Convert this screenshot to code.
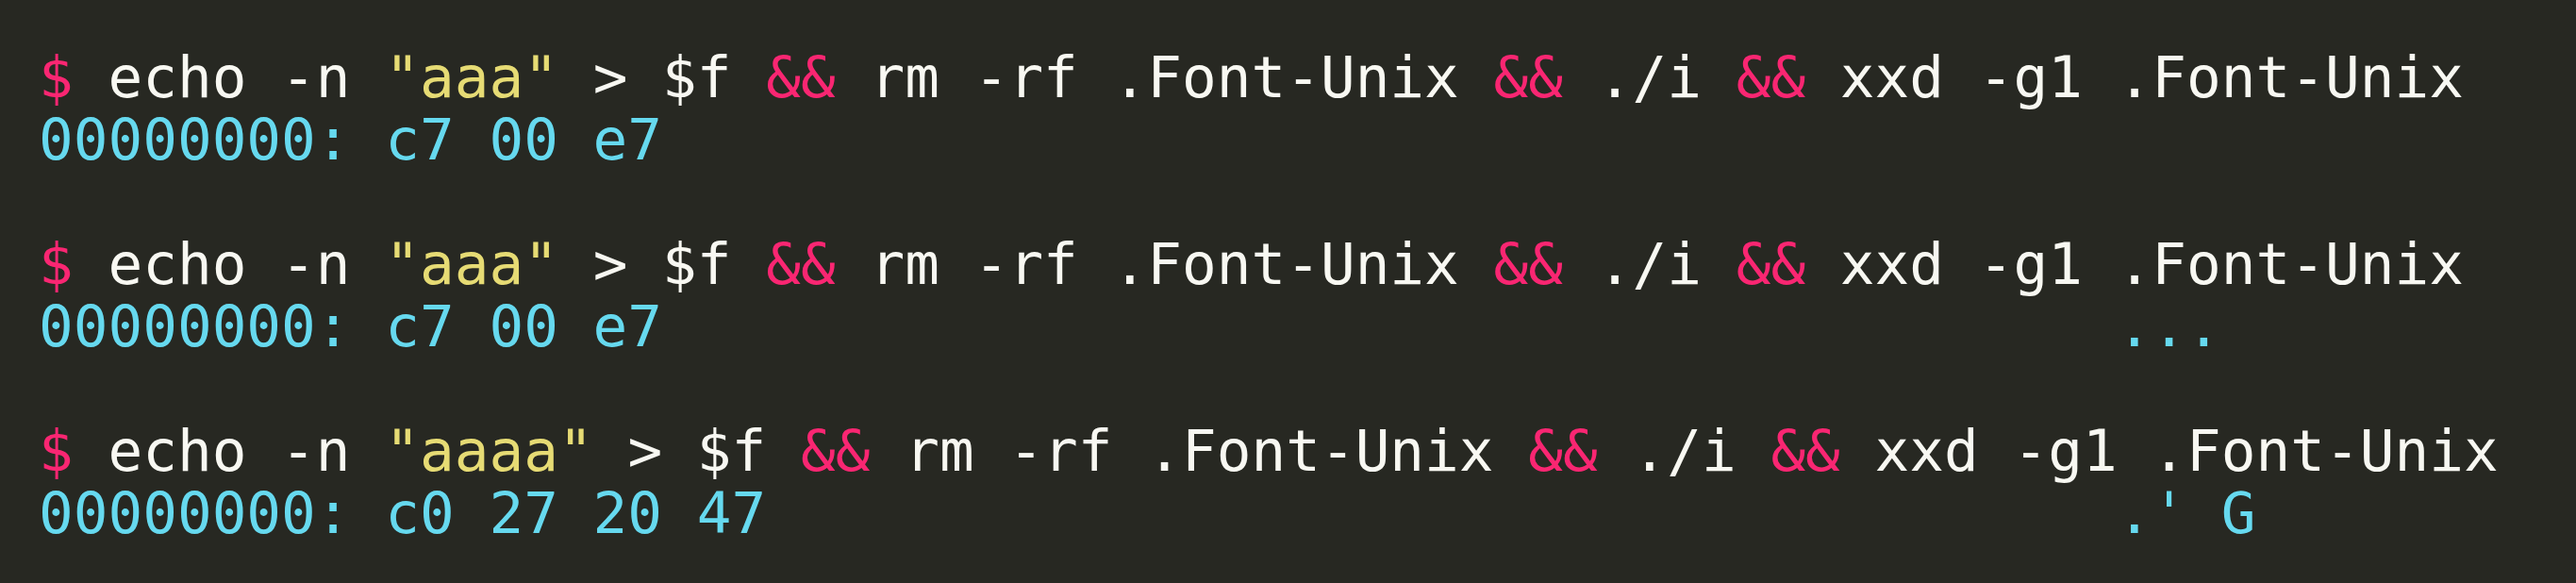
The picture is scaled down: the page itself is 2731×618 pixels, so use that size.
import React from "react";

const pink = "text-[#f92672]";
const white = "text-[#f8f8f2]";
const yellow = "text-[#e6db74]";
const cyan = "text-[#66d9ef]";

function Cmd({ str }) {
  return (
    <div className={white}>
      <span className={pink}>$</span> echo -n{" "}
      <span className={yellow}>"{str}"</span> &gt; $f{" "}
      <span className={pink}>&amp;&amp;</span> rm -rf .Font-Unix{" "}
      <span className={pink}>&amp;&amp;</span> ./i{" "}
      <span className={pink}>&amp;&amp;</span> xxd -g1 .Font-Unix
    </div>
  );
}

function Dump({ hex, ascii }) {
  const line = "00000000: " + hex.join(" ");
  const pad = ascii ? line.padEnd(60, " ") + ascii : line;
  return <div className={cyan}>{pad}</div>;
}

export default function App() {
  return (
    <div className="w-[2731px] h-[618px] bg-[#272822] pt-[49px] pl-[41px] overflow-hidden">
      <div className="font-['DejaVu_Sans_Mono',monospace] text-[61px] leading-[66px] whitespace-pre">
        <Cmd str="aaa" />
        <Dump hex={["c7", "00", "e7"]} />
        <div>&nbsp;</div>
        <Cmd str="aaa" />
        <Dump hex={["c7", "00", "e7"]} ascii="..." />
        <div>&nbsp;</div>
        <Cmd str="aaaa" />
        <Dump hex={["c0", "27", "20", "47"]} ascii=".' G" />
      </div>
    </div>
  );
}
